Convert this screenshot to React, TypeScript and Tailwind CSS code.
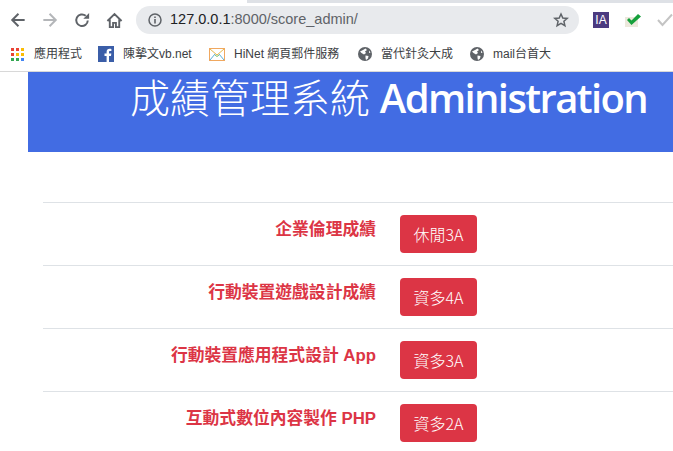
const cjk = "font-['Liberation_Sans','Noto_Sans_CJK_TC',sans-serif]";

const Back = ({ color }: { color: string }) => (
  <svg width="16" height="16" viewBox="0 0 18 18" fill="none" stroke={color} strokeWidth="2.2">
    <path d="M16.500 9H3M9.500 2 2.500 9l7 7" />
  </svg>
);

const Forward = ({ color }: { color: string }) => (
  <svg width="16" height="16" viewBox="0 0 18 18" fill="none" stroke={color} strokeWidth="2.200">
    <path d="M1.500 9H15M8.500 2l7 7-7 7" />
  </svg>
);

const Reload = () => (
  <svg width="16" height="16" viewBox="0 0 18 18" fill="none">
    <path d="M15.500 9.500A6.500 6.500 0 1 1 13.200 4.300" stroke="#5f6368" strokeWidth="2.200" />
    <path d="M10.500 7.500H17V1z" fill="#5f6368" />
  </svg>
);

const Home = () => (
  <svg width="17" height="17" viewBox="0 0 18 18" fill="none" stroke="#5f6368" strokeWidth="2">
    <path d="M1.500 9.500 9 2.200l7.500 7.300M4 8v8h3.500v-4.500h3V16H14V8" />
  </svg>
);

const Info = () => (
  <svg width="14" height="14" viewBox="0 0 14 14" fill="none">
    <circle cx="7" cy="7" r="6" stroke="#5f6368" strokeWidth="1.500" />
    <path d="M6.200 6h1.600v4.500H6.200zM6.200 3.400h1.600V5H6.200z" fill="#5f6368" />
  </svg>
);

const Star = () => (
  <svg width="16" height="16" viewBox="0 0 16 16" fill="none" stroke="#5f6368" strokeWidth="1.500">
    <path d="M8 2l1.800 4 4.400.4-3.300 2.900 1 4.300L8 11.300l-3.900 2.300 1-4.300L1.800 6.400 6.200 6z" />
  </svg>
);

const Apps = () => {
  const colors = ["#ea4335", "#ea4335", "#fbbc04", "#ea4335", "#fbbc04", "#fbbc04", "#34a853", "#34a853", "#4285f4"];
  return (
    <span className="grid grid-cols-3 gap-[2px] w-[13px] h-[13px] mr-[1px]">
      {colors.map((c, i) => (
        <svg key={i} width="3" height="3" viewBox="0 0 3 3">
          <rect width="3" height="3" fill={c} />
        </svg>
      ))}
    </span>
  );
};

const Facebook = () => (
  <svg width="16" height="16" viewBox="0 0 16 16">
    <rect width="16" height="16" fill="#3b5ea8" />
    <path d="M11 16v-6h2l.3-2.400H11V6.200c0-.7.2-1.200 1.200-1.200h1.200V2.900c-.6-.1-1.200-.1-1.800-.1-1.800 0-3 1.100-3 3.100v1.700H6.500V10h2.100v6z" fill="#fff" />
  </svg>
);

const Mail = () => (
  <svg width="16" height="13" viewBox="0 0 16 13" fill="#fff">
    <rect x=".5" y=".5" width="15" height="12" stroke="#f0a860" />
    <path d="M1 1l7 6 7-6" fill="none" stroke="#e8b84a" />
    <path d="M1 12l5-6M15 12l-5-6" fill="none" stroke="#5ab0d8" />
    <path d="M6 7l2 1.500L10 7" fill="none" stroke="#7ac070" />
  </svg>
);

const Globe = () => (
  <svg width="14" height="14" viewBox="0 0 14 14">
    <circle cx="7" cy="7" r="7" fill="#5f6368" />
    <path d="M2 4.500 5 3l2.500-1.500L9 3 7 4.500 8 6 6 7.500 3.500 6zM7.500 8.500l3 .5L10 11.500 8 13l-.5-2zM11 3.500l1.500 2-1.500.5z" fill="#fff" />
  </svg>
);

const IaIcon = () => (
  <span className="w-4 h-4 bg-[#4b3a80] text-white text-[12px] leading-4 text-center font-['Liberation_Sans',sans-serif]">
    IA
  </span>
);

const GreenCheck = () => (
  <svg width="16" height="16" viewBox="0 0 16 16">
    <rect x="0" y="5" width="13" height="10" fill="#ece8dc" />
    <path d="M2 8l2-2 2.500 2.500L13 2l3 2.500L6.500 13z" fill="#16a03c" />
  </svg>
);

const GreyCheck = () => (
  <svg width="16" height="14" viewBox="0 0 16 14" fill="none" stroke="#c4c4c4" strokeWidth="2">
    <path d="M1 7l4.500 5L15 1.500" />
  </svg>
);

const bookmarks = [
  { icon: <Apps />, label: "應用程式", width: "w-[87px]" },
  { icon: <Facebook />, label: "陳摯文vb.net", width: "w-[111px]" },
  { icon: <Mail />, label: "HiNet 網頁郵件服務", width: "w-[149px]" },
  { icon: <Globe />, label: "當代針灸大成", width: "w-[112px]" },
  { icon: <Globe />, label: "mail台首大", width: "w-[90px]" },
];

const rows = [
  { name: "企業倫理成績", button: "休閒3A" },
  { name: "行動裝置遊戲設計成績", button: "資多4A" },
  { name: "行動裝置應用程式設計 App", button: "資多3A" },
  { name: "互動式數位內容製作 PHP", button: "資多2A" },
];

export default function App() {
  return (
    <div className={`w-[673px] h-[451px] overflow-hidden bg-white ${cjk}`}>
      <div className="flex h-[3px]">
        <div className="w-[247px]" />
        <div className="flex-1 bg-[#dee1e6]" />
      </div>
      <div className="flex items-center h-[34px] pl-[10px]">
        <div className="flex items-center gap-[16px] w-[126px]">
          <Back color="#5f6368" />
          <Forward color="#b4b6b9" />
          <Reload />
          <Home />
        </div>
        <div className="flex items-center w-[443px] h-[28px] rounded-full bg-[#e8eaed] pl-[12px] pr-[10px]">
          <Info />
          <span className="ml-[8px] flex-1 text-[14.500px] text-[#5f6368]">
            <span className="text-[#202124]">127.0.0.1</span>:8000/score_admin/
          </span>
          <Star />
        </div>
        <div className="flex items-center gap-[16px] ml-[14px]">
          <IaIcon />
          <GreenCheck />
          <GreyCheck />
        </div>
      </div>
      <div className="flex items-center h-[35px] pl-[11px] border-b border-[#d8d8d8]">
        {bookmarks.map((b) => (
          <div key={b.label} className={`flex items-center gap-[9px] shrink-0 ${b.width}`}>
            {b.icon}
            <span className="text-[12px] text-[#3c4043] whitespace-nowrap">{b.label}</span>
          </div>
        ))}
      </div>
      <main className="pl-[28px]">
        <header className="h-[80px] bg-[#426ce3] pl-[102px] text-white whitespace-nowrap">
          <h1 className="text-[40px] leading-[48px] font-['Open_Sans','Noto_Sans_CJK_TC',sans-serif] font-semibold tracking-[-1.600px]">
            <span className="font-['Noto_Sans_CJK_TC',sans-serif] font-light tracking-normal mr-[1px]">成績管理系統</span> Administration
          </h1>
        </header>
        <section className="mt-[50px] pl-[15px]">
          {rows.map((r) => (
            <div key={r.name} className="flex gap-6 py-[12px] border-t border-[#dee2e6]">
              <div className="w-[333px] text-right text-[16.800px] leading-[30px] font-bold text-[#dc3545] whitespace-nowrap">
                {r.name}
              </div>
              <button className="w-[77px] h-[38px] rounded-[4px] bg-[#dc3545] text-white text-[16px] font-['Noto_Sans_CJK_TC',sans-serif] font-light">
                {r.button}
              </button>
            </div>
          ))}
        </section>
      </main>
    </div>
  );
}
